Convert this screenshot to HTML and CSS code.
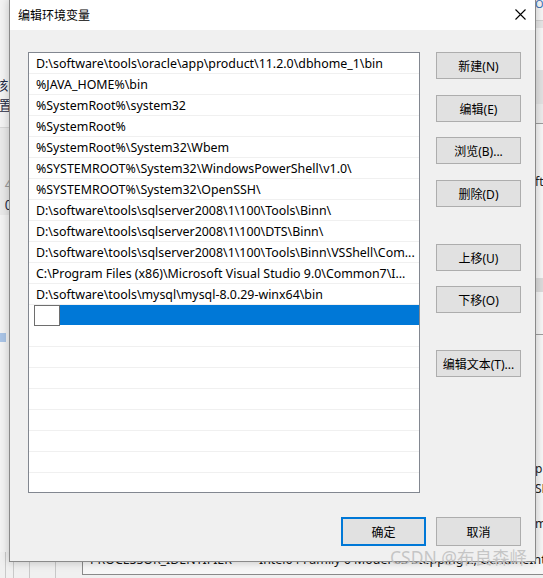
FILE: index.html
```html
<!DOCTYPE html>
<html lang="zh-CN">
<head>
<meta charset="utf-8">
<title>编辑环境变量</title>
<link rel="stylesheet" href="styles.css">
</head>
<body>
<div class="desk">
  <div class="bg-top">
    <div class="bg-left">
      <div class="frag f1">核l</div>
      <div class="frag">置</div>
      <div class="bg-band">
        <div class="frag gray f4">4</div>
        <div class="frag">0</div>
      </div>
      <div class="bg-blue"></div>
    </div>
    <div class="bg-mid"></div>
    <div class="bg-right">
      <div class="rfrag">O(</div>
      <div class="rband r1"></div>
      <div class="rband r2"></div>
      <div class="rband r3"></div>
      <div class="rline"></div>
      <div class="rtext rt1">ft</div>
      <div class="rband r4"></div>
      <div class="rline r5"></div>
      <div class="rtext rt2">ph</div>
      <div class="rtext">SH</div>
      <div class="rtext rt3">mt</div>
    </div>
  </div>
  <div class="bg-bottom">
    <div class="bb-lines"><span class="vl"></span><span class="vl"></span><span class="bb-box"></span></div>
    <div class="bb-list"><span class="bb-name">PROCESSOR_IDENTIFIER</span><span class="bb-val">Intel64 Family 6 Model 63 Stepping 2, GenuineIntel</span></div>
  </div>

  <div class="dialog">
    <div class="titlebar">
      <span class="title">编辑环境变量</span>
      <svg class="close" width="11" height="11" viewBox="0 0 11 11"><path d="M0.5 0.5 L10.5 10.5 M10.5 0.5 L0.5 10.5" stroke="#000" stroke-width="1.1" fill="none"/></svg>
    </div>
    <div class="dbody">
      <div class="main">
        <div class="list">
          <div class="row">D:\software\tools\oracle\app\product\11.2.0\dbhome_1\bin</div>
          <div class="row">%JAVA_HOME%\bin</div>
          <div class="row">%SystemRoot%\system32</div>
          <div class="row">%SystemRoot%</div>
          <div class="row">%SystemRoot%\System32\Wbem</div>
          <div class="row">%SYSTEMROOT%\System32\WindowsPowerShell\v1.0\</div>
          <div class="row">%SYSTEMROOT%\System32\OpenSSH\</div>
          <div class="row">D:\software\tools\sqlserver2008\1\100\Tools\Binn\</div>
          <div class="row">D:\software\tools\sqlserver2008\1\100\DTS\Binn\</div>
          <div class="row">D:\software\tools\sqlserver2008\1\100\Tools\Binn\VSShell\Com...</div>
          <div class="row">C:\Program Files (x86)\Microsoft Visual Studio 9.0\Common7\I...</div>
          <div class="row">D:\software\tools\mysql\mysql-8.0.29-winx64\bin</div>
          <div class="row sel"><span class="editbox"></span><span class="selfill"></span></div>
          <div class="row"></div>
          <div class="row"></div>
          <div class="row"></div>
          <div class="row"></div>
          <div class="row"></div>
          <div class="row"></div>
          <div class="row"></div>
          <div class="row"></div>
        </div>
        <div class="side">
          <div class="btn">新建(N)</div>
          <div class="btn g16">编辑(E)</div>
          <div class="btn g15">浏览(B)...</div>
          <div class="btn g16">删除(D)</div>
          <div class="btn g37">上移(U)</div>
          <div class="btn g15">下移(O)</div>
          <div class="btn g37">编辑文本(T)...</div>
        </div>
      </div>
      <div class="footer">
        <div class="btn fbtn ok">确定</div>
        <div class="btn fbtn">取消</div>
      </div>
    </div>
  </div>
  <div class="watermark">CSDN @布良森峄</div>
</div>
</body>
</html>
```

FILE: styles.css
```css
* { box-sizing: border-box; }
html, body { margin: 0; padding: 0; }
body {
  width: 543px;
  height: 578px;
  overflow: hidden;
  background: #f0f0f0;
  font-family: "Noto Sans", "Noto Sans CJK SC", sans-serif;
  font-size: 12px;
  color: #000;
}
.desk {
  position: relative;
  width: 543px;
  height: 578px;
  overflow: hidden;
  display: flex;
  flex-direction: column;
}

/* backdrop (parent window, mostly hidden) */
.bg-top { height: 552px; display: flex; flex: none; }
.bg-left {
  width: 9px;
  overflow: hidden;
  display: flex;
  flex-direction: column;
  align-items: flex-end;
  background: #f3f3f3;
}
.frag {
  font-family: "Noto Sans CJK SC", sans-serif;
  font-size: 13px;
  line-height: 20px;
  color: #1f2a44;
  white-space: nowrap;
  margin-right: -3px;
}
.f1 { margin-top: 75px; }
.bg-band {
  margin-top: 12px;
  width: 100%;
  border-top: 1px solid #d6d6d6;
  background: #e9e9e9;
  height: 88px;
  display: flex;
  flex-direction: column;
  align-items: flex-end;
}
.frag.gray { color: #9a9a9a; }
.f4 { margin-top: 47px; }
.bg-blue {
  margin-top: 118px;
  width: 6px;
  height: 9px;
  align-self: flex-start;
  background: #a9c4e6;
}
.bg-mid { flex: 1; }
.bg-right {
  width: 8px;
  overflow: hidden;
  display: flex;
  flex-direction: column;
  background: #f7f7f7;
}
.rfrag { font-size: 11px; line-height: 12px; color: #3a6fb5; margin-top: -2px; white-space: nowrap; }
.rband { width: 100%; }
.r1 { margin-top: 10px; height: 8px; background: #e6e6e6; border-top: 1px solid #d2d2d2; }
.r2 { margin-top: 42px; height: 34px; background: #e2e2e2; }
.r3 { height: 19px; background: #ececec; }
.rline { height: 1px; background: #9d9d9d; width: 100%; }
.rtext { font-size: 12px; line-height: 20px; color: #222; white-space: nowrap; }
.rt1 { margin-top: 48px; }
.r4 { margin-top: 86px; height: 14px; background: #dcdcdc; }
.r5 { margin-top: 42px; }
.rt2 { margin-top: 124px; }
.rt3 { margin-top: 15px; }

.bg-bottom { flex: 1; display: flex; }
.bb-lines { width: 82px; flex: none; display: flex; align-items: stretch; }
.vl { width: 1px; background: #c9c9c9; margin-left: 5px; }
.vl + .vl { margin-left: 7px; }
.bb-box { width: 27px; margin-left: 15px; margin-top: 8px; border: 1px solid #c8c8c8; border-bottom: none; }
.bb-list {
  flex: 1;
  height: 23px;
  border-left: 1px solid #8a8a8a;
  border-bottom: 1px solid #8a8a8a;
  background: #f7f7f7;
  display: flex;
  align-items: flex-end;
  padding: 0 0 4px 7px;
  white-space: nowrap;
  overflow: hidden;
  font-size: 12.4px;
  line-height: 20px;
  color: #111;
}
.bb-name { width: 169px; flex: none; }
.bb-val { flex: none; }

/* dialog window */
.dialog {
  position: absolute;
  left: 9px;
  top: -1px;
  width: 527px;
  height: 563px;
  border: 1px solid #8a8a8a;
  background: #f0f0f0;
  display: flex;
  flex-direction: column;
  box-shadow: 0 0 9px rgba(0, 0, 0, 0.22);
}
.titlebar {
  height: 30px;
  background: #fff;
  display: flex;
  align-items: center;
  justify-content: space-between;
  padding: 0 9px 0 8px;
  flex: none;
}
.title {
  font-family: "Noto Sans CJK SC", sans-serif;
  font-size: 12px;
  line-height: 16px;
}
.close { margin-bottom: 2px; display: block; }
.dbody {
  flex: 1;
  display: flex;
  flex-direction: column;
  padding: 22px 14px 0 18px;
}
.main { display: flex; gap: 16px; }
.list {
  width: 392px;
  height: 441px;
  flex: none;
  border: 1px solid #828790;
  background: #fff;
  overflow: hidden;
}
.row {
  height: 21px;
  border-bottom: 1px solid #f0f0f0;
  padding-left: 7px;
  font-size: 12.4px;
  line-height: 21px;
  white-space: nowrap;
  overflow: hidden;
}
.row.sel {
  display: flex;
  padding-left: 5px;
  border-bottom: none;
  overflow: visible;
}
.editbox {
  width: 26px;
  height: 21px;
  border: 1px solid #6e6e6e;
  background: #fff;
  flex: none;
}
.selfill { flex: 1; height: 20px; background: #0078d7; }
.side { width: 85px; display: flex; flex-direction: column; }
.btn {
  height: 27px;
  border: 1px solid #adadad;
  background: #e1e1e1;
  display: flex;
  align-items: center;
  justify-content: center;
  font-family: "Noto Sans", "Noto Sans CJK SC", sans-serif;
  font-size: 12px;
  white-space: nowrap;
}
.g15 { margin-top: 15px; }
.g16 { margin-top: 16px; }
.g37 { margin-top: 37px; }
.footer {
  display: flex;
  justify-content: flex-end;
  gap: 10px;
  margin-top: 24px;
}
.fbtn { width: 85px; height: 29px; }
.ok { border: 2px solid #0078d7; }

.watermark {
  position: absolute;
  left: 390px;
  top: 547px;
  font-family: "Noto Sans", "Noto Sans CJK SC", sans-serif;
  font-size: 17.5px;
  line-height: 20px;
  color: rgba(190, 190, 190, 0.85);
  white-space: nowrap;
}
```
